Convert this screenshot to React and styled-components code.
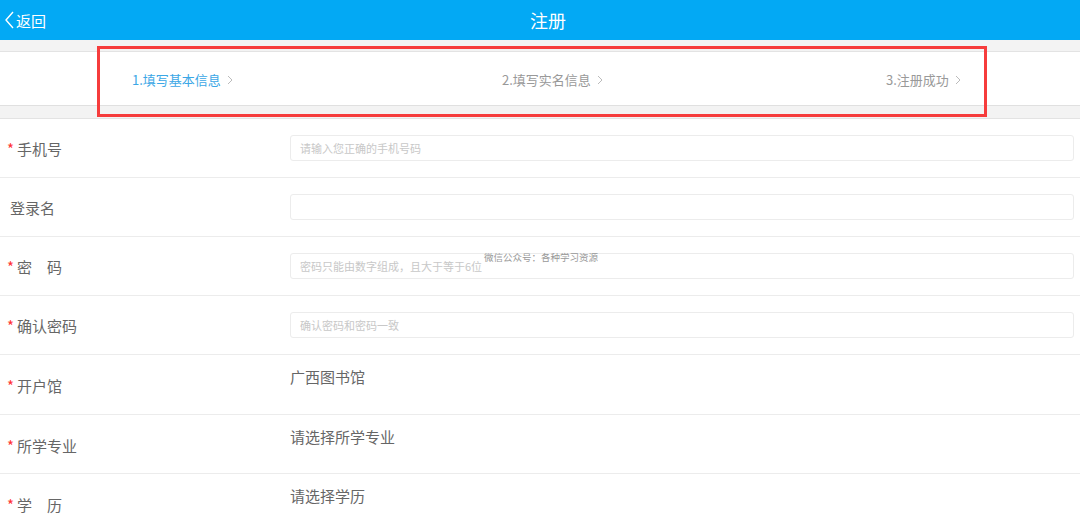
import styled, { createGlobalStyle } from "styled-components";

const GlobalStyle = createGlobalStyle`
  html, body { margin: 0; padding: 0; background: #fff; }
  body { font-family: "Noto Sans CJK SC", "Noto Sans", sans-serif; }
  * { box-sizing: border-box; }
`;

const Page = styled.div`
  position: relative;
  width: 1080px;
  height: 520px;
  overflow: hidden;
  background: #fff;
`;

const Header = styled.div`
  height: 40px;
  background: #03a9f4;
  display: flex;
  align-items: center;
  justify-content: center;
  position: relative;
  color: #fff;
  padding-left: 16px;
`;

const Back = styled.div`
  position: absolute;
  left: 4px;
  top: 0;
  height: 40px;
  display: flex;
  align-items: center;
  font-size: 15px;
  gap: 1px;
`;

const Title = styled.div`
  font-size: 18px;
`;

const Gap = styled.div`
  height: ${(p) => p.$h || 12}px;
  background: #f3f3f3;
  border-bottom: 1px solid #e3e3e3;
`;

const Steps = styled.div`
  height: 54px;
  background: #fff;
  border-bottom: 1px solid #e0e0e0;
  display: flex;
  align-items: center;
  padding: 2px 0 0 132px;
  font-size: 13px;
`;

const Step = styled.div`
  display: flex;
  align-items: center;
  gap: 6px;
  color: ${(p) => (p.$active ? "#3ba7e6" : "#999")};
  width: ${(p) => p.$w}px;
`;

const Row = styled.div`
  height: ${(p) => p.$h || 59}px;
  border-bottom: 1px solid #ececec;
  display: flex;
  align-items: ${(p) => (p.$top ? "stretch" : "center")};
`;

const Label = styled.div`
  width: 290px;
  padding-left: ${(p) => (p.$req ? 7 : 10)}px;
  display: flex;
  align-items: center;
  font-size: 15px;
  color: #666;
  padding-top: ${(p) => (p.$top ? 2 : 0)}px;
`;

const Star = styled.span`
  color: #f33;
  font-size: 15px;
  width: 10px;
`;

const Input = styled.div`
  width: 784px;
  height: 26px;
  border: 1px solid #ececec;
  border-radius: 3px;
  padding-left: 9px;
  display: flex;
  align-items: center;
  font-size: 11px;
  color: #c8c8c8;
`;

const Value = styled.div`
  font-size: 15px;
  color: #666;
  padding-top: 11px;
`;

const Marker = styled.div`
  position: absolute;
  left: 97px;
  top: 46px;
  width: 890px;
  height: 71px;
  border: 3px solid #f63c3c;
  pointer-events: none;
`;

const Watermark = styled.div`
  position: absolute;
  left: 484px;
  top: 250px;
  font-size: 9.5px;
  color: #999;
`;

const Chevron = ({ size = 10, color = "#bbb", w = 1 }) => (
  <svg width={size * 0.6} height={size} viewBox="0 0 6 10">
    <path d="M1 1 L5 5 L1 9" fill="none" stroke={color} strokeWidth={w} />
  </svg>
);

const rows = [
  { label: "手机号", req: true, ph: "请输入您正确的手机号码" },
  { label: "登录名", req: false, ph: "" },
  { label: "密\u3000码", req: true, ph: "密码只能由数字组成，且大于等于6位" },
  { label: "确认密码", req: true, ph: "确认密码和密码一致" },
];

const selects = [
  { label: "开户馆", value: "广西图书馆", h: 60 },
  { label: "所学专业", value: "请选择所学专业", h: 59 },
  { label: "学\u3000历", value: "请选择学历", h: 59 },
];

export default function App() {
  return (
    <Page>
      <GlobalStyle />
      <Header>
        <Back>
          <svg width="11" height="18" viewBox="0 0 11 18">
            <path d="M9 1 L2 9 L9 17" fill="none" stroke="#fff" strokeWidth="1.4" />
          </svg>
          返回
        </Back>
        <Title>注册</Title>
      </Header>
      <Gap />
      <Steps>
        <Step $active $w={370}>
          1.填写基本信息 <Chevron />
        </Step>
        <Step $w={384}>
          2.填写实名信息 <Chevron />
        </Step>
        <Step>
          3.注册成功 <Chevron />
        </Step>
      </Steps>
      <Gap $h={13} />
      {rows.map((r) => (
        <Row key={r.label}>
          <Label $req={r.req}>
            {r.req && <Star>*</Star>}
            {r.label}
          </Label>
          <Input>{r.ph}</Input>
        </Row>
      ))}
      {selects.map((s) => (
        <Row key={s.label} $top $h={s.h}>
          <Label $req $top>
            <Star>*</Star>
            {s.label}
          </Label>
          <Value>{s.value}</Value>
        </Row>
      ))}
      <Marker />
      <Watermark>微信公众号：各种学习资源</Watermark>
    </Page>
  );
}
